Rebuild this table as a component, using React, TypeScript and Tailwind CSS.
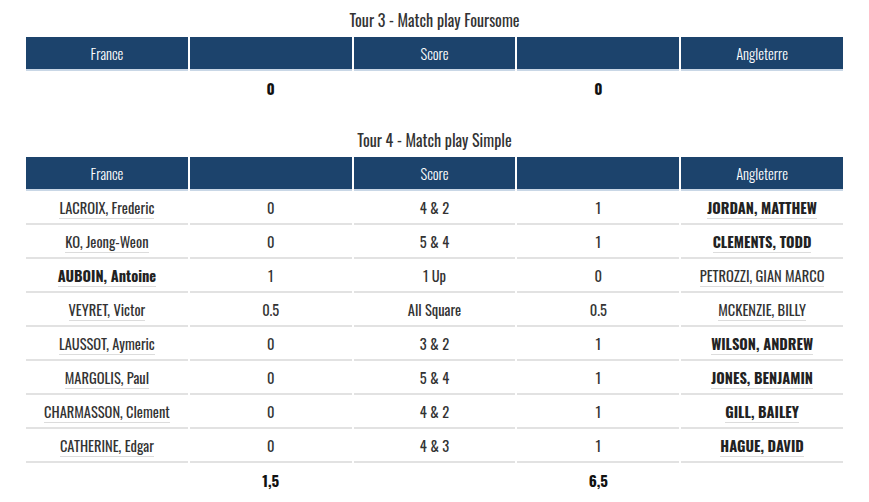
type Row = {
  fr: string;
  frBold?: boolean;
  frPts: string;
  score: string;
  enPts: string;
  en: string;
  enBold?: boolean;
};

const rows: Row[] = [
  { fr: "LACROIX, Frederic", frPts: "0", score: "4 & 2", enPts: "1", en: "JORDAN, MATTHEW", enBold: true },
  { fr: "KO, Jeong-Weon", frPts: "0", score: "5 & 4", enPts: "1", en: "CLEMENTS, TODD", enBold: true },
  { fr: "AUBOIN, Antoine", frBold: true, frPts: "1", score: "1 Up", enPts: "0", en: "PETROZZI, GIAN MARCO" },
  { fr: "VEYRET, Victor", frPts: "0.5", score: "All Square", enPts: "0.5", en: "MCKENZIE, BILLY" },
  { fr: "LAUSSOT, Aymeric", frPts: "0", score: "3 & 2", enPts: "1", en: "WILSON, ANDREW", enBold: true },
  { fr: "MARGOLIS, Paul", frPts: "0", score: "5 & 4", enPts: "1", en: "JONES, BENJAMIN", enBold: true },
  { fr: "CHARMASSON, Clement", frPts: "0", score: "4 & 2", enPts: "1", en: "GILL, BAILEY", enBold: true },
  { fr: "CATHERINE, Edgar", frPts: "0", score: "4 & 3", enPts: "1", en: "HAGUE, DAVID", enBold: true },
];

function Header() {
  return (
    <div className="grid grid-cols-5 gap-x-[2px] text-white text-[14.5px] font-light">
      <div className="h-[34px] pt-[2px] bg-[#1c436c] border-b-2 border-[#c9d7e6] flex items-center justify-center">France</div>
      <div className="h-[34px] bg-[#1c436c] border-b-2 border-[#c9d7e6]" />
      <div className="h-[34px] pt-[2px] bg-[#1c436c] border-b-2 border-[#c9d7e6] flex items-center justify-center">Score</div>
      <div className="h-[34px] bg-[#1c436c] border-b-2 border-[#c9d7e6]" />
      <div className="h-[34px] pt-[2px] bg-[#1c436c] border-b-2 border-[#c9d7e6] flex items-center justify-center">Angleterre</div>
    </div>
  );
}

function Name({ text, bold }: { text: string; bold?: boolean }) {
  return (
    <span
      className={
        bold
          ? "inline-block leading-[20px] border-b border-[#dcdcdc] font-bold text-[#222]"
          : "inline-block leading-[20px] border-b border-[#dcdcdc] font-normal text-[#333]"
      }
    >
      {text}
    </span>
  );
}

function Cell({ children }: { children?: React.ReactNode }) {
  return (
    <div className="h-[34px] pt-[2px] flex items-center justify-center border-b-2 border-[#e2e2e2]">{children}</div>
  );
}

export default function App() {
  return (
    <div className="w-[869px] h-[502px] bg-white font-['Oswald',sans-serif] text-[14.5px] text-[#333] overflow-hidden">
      <div className="mx-[26px] pt-[10px]">
        <div className="text-center text-[16px] font-normal leading-[20px] text-[#333]">Tour 3 - Match play Foursome</div>
        <div className="mt-[7px]">
          <Header />
          <div className="grid grid-cols-5 gap-x-[2px] font-bold text-[15px] text-[#111]">
            <div className="h-[34px]" />
            <div className="h-[34px] pt-[1px] flex items-center justify-center">0</div>
            <div className="h-[34px]" />
            <div className="h-[34px] pt-[1px] flex items-center justify-center">0</div>
            <div className="h-[34px]" />
          </div>
        </div>
        <div className="mt-[25px] text-center text-[16px] font-normal leading-[20px] text-[#333]">Tour 4 - Match play Simple</div>
        <div className="mt-[7px]">
          <Header />
          {rows.map((r) => (
            <div key={r.fr} className="grid grid-cols-5 gap-x-[2px] font-normal">
              <Cell>
                <Name text={r.fr} bold={r.frBold} />
              </Cell>
              <Cell>{r.frPts}</Cell>
              <Cell>{r.score}</Cell>
              <Cell>{r.enPts}</Cell>
              <Cell>
                <Name text={r.en} bold={r.enBold} />
              </Cell>
            </div>
          ))}
          <div className="grid grid-cols-5 gap-x-[2px] font-bold text-[15px] text-[#111]">
            <div className="h-[34px]" />
            <div className="h-[34px] pt-[1px] flex items-center justify-center">1,5</div>
            <div className="h-[34px]" />
            <div className="h-[34px] pt-[1px] flex items-center justify-center">6,5</div>
            <div className="h-[34px]" />
          </div>
        </div>
      </div>
    </div>
  );
}
